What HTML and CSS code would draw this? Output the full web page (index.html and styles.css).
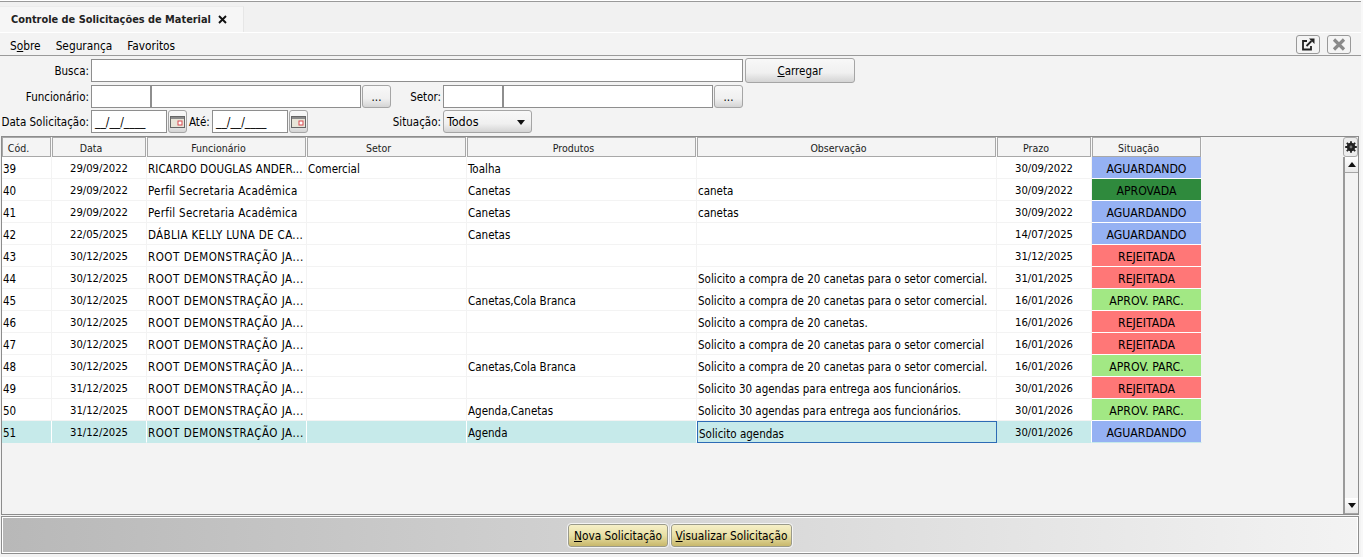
FILE: index.html
```html
<!DOCTYPE html>
<html lang="pt-BR">
<head>
<meta charset="utf-8">
<title>Controle de Solicitações de Material</title>
<link rel="stylesheet" href="styles.css">
</head>
<body>
<div class="app">
  <div class="tabstrip">
    <div class="tab"><span class="tab-title">Controle de Solicitações de Material</span><svg class="tab-close" width="9" height="9" viewBox="0 0 9 9"><path d="M1 1l7 7M8 1L1 8" stroke="#111" stroke-width="1.9"/></svg></div>
  </div>
  <div class="menubar">
    <nav class="menu"><span>S<u>o</u>bre</span><span>Segurança</span><span>Favoritos</span></nav>
    <div class="win-btns">
      <button class="win-btn"><svg width="14" height="13" viewBox="0 0 14 13"><path d="M6 3H2v8.500h8V8" fill="none" stroke="#222" stroke-width="1.800"/><path d="M5.500 8l5-5" stroke="#222" stroke-width="1.800"/><path d="M8 .5h5.500V6z" fill="#222"/></svg></button>
      <button class="win-btn"><svg width="14" height="13" viewBox="0 0 14 13"><path d="M2 1.500l10 10M12 1.500l-10 10" stroke="#8a8a8a" stroke-width="3.200"/></svg></button>
    </div>
  </div>
  <form class="filters">
    <div class="row row-busca">
      <label class="lbl">Busca:</label>
      <input class="field f-busca">
      <button type="button" class="btn btn-load"><u>C</u>arregar</button>
    </div>
    <div class="row">
      <label class="lbl">Funcionário:</label>
      <input class="field f-code">
      <input class="field f-name">
      <button type="button" class="btn btn-dots">...</button>
      <label class="lbl lbl-setor">Setor:</label>
      <input class="field f-code">
      <input class="field f-name">
      <button type="button" class="btn btn-dots">...</button>
    </div>
    <div class="row">
      <label class="lbl">Data Solicitação:</label>
      <div class="field f-date">__/__/____</div>
      <button type="button" class="btn btn-cal"><svg width="15" height="12" viewBox="0 0 15 12"><rect x=".5" y=".5" width="14" height="11" fill="#e8e4d8" stroke="#666"/><rect x="1" y="1" width="13" height="2" fill="#8a8a8a"/><rect x="8" y="5" width="4" height="4" fill="#fff" stroke="#d8484f"/></svg></button>
      <label class="lbl-ate">Até:</label>
      <div class="field f-date">__/__/____</div>
      <button type="button" class="btn btn-cal"><svg width="15" height="12" viewBox="0 0 15 12"><rect x=".5" y=".5" width="14" height="11" fill="#e8e4d8" stroke="#666"/><rect x="1" y="1" width="13" height="2" fill="#8a8a8a"/><rect x="8" y="5" width="4" height="4" fill="#fff" stroke="#d8484f"/></svg></button>
      <label class="lbl lbl-sit">Situação:</label>
      <div class="btn select"><span>Todos</span><i class="caret"></i></div>
    </div>
  </form>
  <section class="grid-panel">
    <div class="grid-area">
      <table class="grid">
        <colgroup><col class="c1"><col class="c2"><col class="c3"><col class="c4"><col class="c5"><col class="c6"><col class="c7"><col class="c8"></colgroup>
        <thead>
          <tr><th>Cód.</th><th>Data</th><th>Funcionário</th><th>Setor</th><th>Produtos</th><th>Observação</th><th>Prazo</th><th>Situação</th></tr>
        </thead>
        <tbody>
          <tr><td>39</td><td class="ctr">29/09/2022</td><td class="nm-a">RICARDO DOUGLAS ANDER...</td><td>Comercial</td><td>Toalha</td><td></td><td class="ctr">30/09/2022</td><td class="st wait">AGUARDANDO</td></tr>
          <tr><td>40</td><td class="ctr">29/09/2022</td><td class="nm-p">Perfil Secretaria Acadêmica</td><td></td><td>Canetas</td><td>caneta</td><td class="ctr">30/09/2022</td><td class="st ok">APROVADA</td></tr>
          <tr><td>41</td><td class="ctr">29/09/2022</td><td class="nm-p">Perfil Secretaria Acadêmica</td><td></td><td>Canetas</td><td>canetas</td><td class="ctr">30/09/2022</td><td class="st wait">AGUARDANDO</td></tr>
          <tr><td>42</td><td class="ctr">22/05/2025</td><td class="nm-b">DÁBLIA KELLY LUNA DE CA...</td><td></td><td>Canetas</td><td></td><td class="ctr">14/07/2025</td><td class="st wait">AGUARDANDO</td></tr>
          <tr><td>43</td><td class="ctr">30/12/2025</td><td class="nm-r">ROOT DEMONSTRAÇÃO JA...</td><td></td><td></td><td></td><td class="ctr">31/12/2025</td><td class="st rej">REJEITADA</td></tr>
          <tr><td>44</td><td class="ctr">30/12/2025</td><td class="nm-r">ROOT DEMONSTRAÇÃO JA...</td><td></td><td></td><td>Solicito a compra de 20 canetas para o setor comercial.</td><td class="ctr">31/01/2025</td><td class="st rej">REJEITADA</td></tr>
          <tr><td>45</td><td class="ctr">30/12/2025</td><td class="nm-r">ROOT DEMONSTRAÇÃO JA...</td><td></td><td>Canetas,Cola Branca</td><td>Solicito a compra de 20 canetas para o setor comercial.</td><td class="ctr">16/01/2026</td><td class="st part">APROV. PARC.</td></tr>
          <tr><td>46</td><td class="ctr">30/12/2025</td><td class="nm-r">ROOT DEMONSTRAÇÃO JA...</td><td></td><td></td><td>Solicito a compra de 20 canetas.</td><td class="ctr">16/01/2026</td><td class="st rej">REJEITADA</td></tr>
          <tr><td>47</td><td class="ctr">30/12/2025</td><td class="nm-r">ROOT DEMONSTRAÇÃO JA...</td><td></td><td></td><td>Solicito a compra de 20 canetas para o setor comercial</td><td class="ctr">16/01/2026</td><td class="st rej">REJEITADA</td></tr>
          <tr><td>48</td><td class="ctr">30/12/2025</td><td class="nm-r">ROOT DEMONSTRAÇÃO JA...</td><td></td><td>Canetas,Cola Branca</td><td>Solicito a compra de 20 canetas para o setor comercial.</td><td class="ctr">16/01/2026</td><td class="st part">APROV. PARC.</td></tr>
          <tr><td>49</td><td class="ctr">31/12/2025</td><td class="nm-r">ROOT DEMONSTRAÇÃO JA...</td><td></td><td></td><td>Solicito 30 agendas para entrega aos funcionários.</td><td class="ctr">30/01/2026</td><td class="st rej">REJEITADA</td></tr>
          <tr><td>50</td><td class="ctr">31/12/2025</td><td class="nm-r">ROOT DEMONSTRAÇÃO JA...</td><td></td><td>Agenda,Canetas</td><td>Solicito 30 agendas para entrega aos funcionários.</td><td class="ctr">30/01/2026</td><td class="st part">APROV. PARC.</td></tr>
          <tr class="sel"><td>51</td><td class="ctr">31/12/2025</td><td class="nm-r">ROOT DEMONSTRAÇÃO JA...</td><td></td><td>Agenda</td><td class="focus">Solicito agendas</td><td class="ctr">30/01/2026</td><td class="st wait">AGUARDANDO</td></tr>
        </tbody>
      </table>
    </div>
    <aside class="vscroll">
      <button class="gear"><svg width="12" height="12" viewBox="0 0 12 12"><circle cx="6" cy="6" r="4.200" fill="#222"/><path d="M6 .2v2.500M6 9.300v2.500M.2 6h2.500M9.300 6h2.500M1.800 1.800l1.800 1.800M8.400 8.400l1.800 1.800M10.200 1.800L8.400 3.600M3.600 8.400l-1.800 1.800" stroke="#222" stroke-width="1.800"/><circle cx="6" cy="6" r="1.400" fill="#777"/></svg></button>
      <div class="sb-arrow"><i class="tri up"></i></div>
      <div class="sb-track"></div>
      <div class="sb-arrow"><i class="tri down"></i></div>
    </aside>
  </section>
  <footer class="actions">
    <button class="act act-new"><u>N</u>ova Solicitação</button>
    <button class="act act-view"><u>V</u>isualizar Solicitação</button>
  </footer>
</div>
</body>
</html>
```

FILE: styles.css
```css
* { box-sizing: border-box; }
html, body { margin: 0; height: 100%; overflow: hidden; }
body {
  background: #f8f8f8;
  color: #000;
  font: 11.5px/14px "DejaVu Sans Condensed", "DejaVu Sans", sans-serif;
  font-stretch: condensed;
}
.app { width: 1361px; height: 557px; display: flex; flex-direction: column; border-top: 1px solid #fff; background: #f3f3f3; }
button { font: inherit; font-stretch: inherit; color: inherit; padding: 0; }

.tabstrip { height: 31px; border-top: 1px solid #9a9a9a; background: #f1f1f1; padding-top: 4px; display: flex; }
.tab { width: 244px; height: 26px; background: #f6f6f6; border-right: 1px solid #e6e6e6; border-top: 1px solid #ececec; display: flex; align-items: center; padding-left: 11px; gap: 7px; }
.tab-title { font-weight: 700; font-size: 10.9px; color: #222; }

.menubar { height: 24px; background: #f3f3f3; border-top: 1px solid #fff; border-bottom: 1px solid #9a9a9a; display: flex; justify-content: space-between; align-items: center; }
.menu { display: flex; gap: 15px; padding: 3px 0 0 10px; font-size: 11.8px; }
.win-btns { display: flex; gap: 7px; padding-right: 10px; }
.win-btn { width: 24px; height: 19px; background: #f4f4f4; border: 1px solid #999; border-radius: 3px; display: flex; align-items: center; justify-content: center; }

.filters { height: 80px; padding-top: 2px; display: flex; flex-direction: column; gap: 2px; }
.row { height: 23px; display: flex; align-items: center; }
.row-busca { height: 25px; }
.lbl { width: 89px; text-align: right; margin-right: 2px; padding-top: 1px; flex: none; white-space: nowrap; }
.lbl-setor { width: 50px; }
.lbl-sit { width: 133px; }
.lbl-ate { padding: 1px 3px 0 2px; width: 25px; white-space: nowrap; }
.field { height: 23px; background: #fff; border: 1px solid #8e8e8e; outline: 0; font: inherit; padding: 0 3px; line-height: 23px; border-radius: 0; }
.f-busca { width: 652px; }
.f-code { width: 60px; }
.f-name { width: 210px; }
.f-date { width: 76px; font-size: 12px; }
.btn { background: linear-gradient(#f8f8f8, #f0f0f0 60%, #d4d4d4); border: 1px solid #a5a5a5; border-radius: 3px; display: flex; align-items: center; justify-content: center; }
.btn-load { width: 110px; height: 25px; margin-left: 2px; padding-top: 1px; }
.btn-dots { width: 29px; height: 23px; margin-left: 1px; }
.btn-cal { width: 19px; height: 23px; margin-left: 1px; }
.select { width: 89px; height: 23px; justify-content: space-between; padding: 1px 6px 0 3px; font-size: 12.5px; }
.caret { width: 0; height: 0; border: 4.5px solid transparent; border-top: 5px solid #111; border-bottom: 0; }

.grid-panel { width: 1358px; height: 379px; margin-left: 1px; border: 1px solid #8c8c8c; display: flex; }
.grid-area { flex: 1; min-width: 0; }
.grid { table-layout: fixed; border-collapse: separate; border-spacing: 0; width: 1200px; }
.c1 { width: 50px; } .c2 { width: 95px; } .c3, .c4 { width: 160px; } .c5 { width: 230px; } .c6 { width: 300px; } .c7 { width: 95px; } .c8 { width: 110px; }
.grid th { height: 20px; padding: 2px 16px 0 0; font-weight: 400; font-size: 10.5px; background: #f4f4f4; border-right: 1px solid #f9f9f9; box-shadow: inset 0 0 0 1px #a8a8a8; color: #222; }
.grid td { height: 22px; padding: 3px 1px 0; background: #fff; border-right: 1px solid #f3f3f3; border-bottom: 1px solid #f3f3f3; white-space: nowrap; overflow: hidden; }
.grid .ctr { text-align: center; font-size: 11.2px; }
.grid .nm-a { letter-spacing: .12px; }
.grid .nm-b { letter-spacing: .33px; }
.grid .nm-p { letter-spacing: .28px; }
.grid .nm-r { letter-spacing: .52px; }
.grid .st { text-align: center; font-size: 12.2px; border-bottom: 1px solid #fff; }
.grid .wait { background: #95b1f3; }
.grid .ok { background: #2f8a3d; }
.grid .rej { background: #ff7777; }
.grid .part { background: #a2e884; }
.grid .sel td { background: #c6eaea; border-right-color: #fff; border-bottom-color: #c6eaea; }
.grid .sel .focus { border: 1px solid #2d6bb5; }
.grid .sel .st { background: #95b1f3; border-right-color: #f3f3f3; }

.vscroll { width: 15px; flex: none; display: flex; flex-direction: column; }
.gear { height: 20px; background: #ededed; border: 1px solid #aaa; border-radius: 3px; display: flex; align-items: center; justify-content: center; }
.sb-arrow { height: 16px; margin-left: 2px; background: linear-gradient(#fff, #e8e8e8); border-bottom: 1px solid #a5a5a5; box-shadow: -2px 0 0 #9a9a9a; display: flex; align-items: center; justify-content: center; flex: none; }
.sb-track { flex: 1; border-left: 2px solid #9a9a9a; }
.tri { width: 0; height: 0; border: 4.5px solid transparent; }
.tri.up { border-bottom: 5px solid #111; border-top: 0; }
.tri.down { border-top: 5px solid #111; border-bottom: 0; }

.actions { width: 1358px; height: 38px; margin: 1px 0 0 1px; border: 1px solid #8e8e8e; box-shadow: inset 0 0 0 1px #fff; background: linear-gradient(90deg, #b8b8b8, #f3f3f3); display: flex; justify-content: center; align-items: center; gap: 3px; }
.act { height: 23px; padding-top: 2px; font-size: 11.8px; background: linear-gradient(#f6f0c8, #e8dfa4 50%, #c8b86c); border: 1px solid #9a9a8a; outline: 1px solid #f4f4f4; border-radius: 3px; }
.act-new { width: 100px; }
.act-view { width: 121px; }
```
